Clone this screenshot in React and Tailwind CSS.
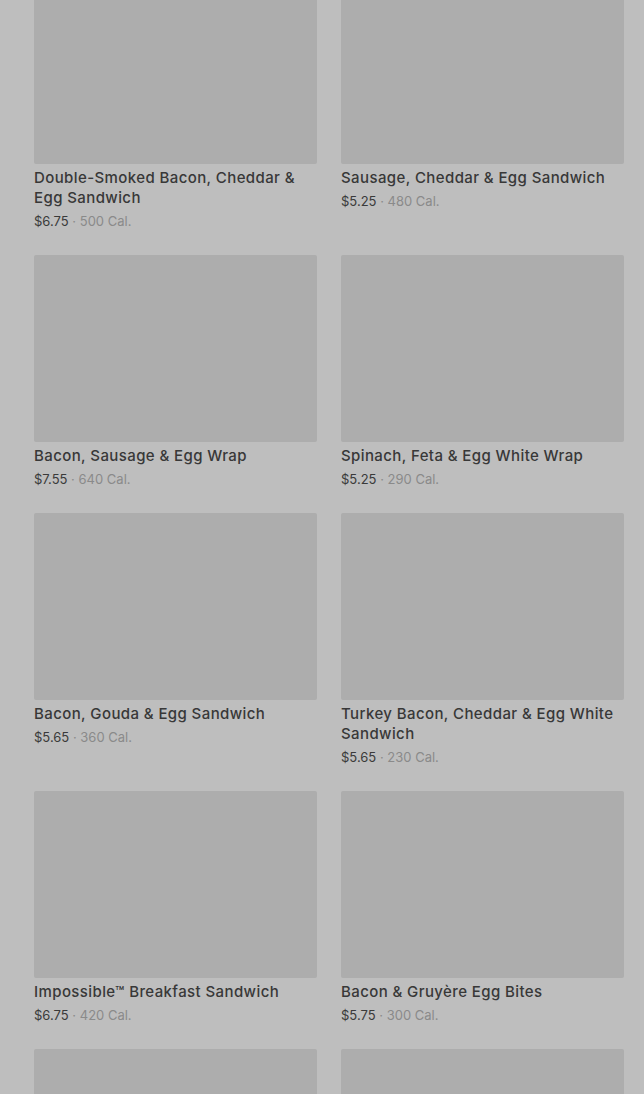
import React from "react";

const items = [
  { name: "Double-Smoked Bacon, Cheddar & Egg Sandwich", price: "$6.75", cal: "500 Cal." },
  { name: "Sausage, Cheddar & Egg Sandwich", price: "$5.25", cal: "480 Cal." },
  { name: "Bacon, Sausage & Egg Wrap", price: "$7.55", cal: "640 Cal." },
  { name: "Spinach, Feta & Egg White Wrap", price: "$5.25", cal: "290 Cal." },
  { name: "Bacon, Gouda & Egg Sandwich", price: "$5.65", cal: "360 Cal." },
  { name: "Turkey Bacon, Cheddar & Egg White Sandwich", price: "$5.65", cal: "230 Cal." },
  { name: "Impossible™ Breakfast Sandwich", price: "$6.75", cal: "420 Cal." },
  { name: "Bacon & Gruyère Egg Bites", price: "$5.75", cal: "300 Cal." },
  { name: "", price: "", cal: "" },
  { name: "", price: "", cal: "" },
];

function Card({ item }) {
  return (
    <div className="flex flex-col">
      <div className="h-[187px] w-full rounded-[2px] bg-[#adadad]" />
      {item.name && (
        <>
          <p className="mt-1 text-[15px] leading-5 font-medium tracking-[0.4px] text-[#383838]">
            {item.name}
          </p>
          <p className="mt-[3px] text-[13px] leading-5 text-[#3a3a3a]">
            {item.price}
            <span className="text-[#8a8a8a]"> · {item.cal}</span>
          </p>
        </>
      )}
    </div>
  );
}

export default function App() {
  return (
    <div
      className="h-[1094px] overflow-hidden bg-[#bebebe]"
      style={{ fontFamily: "Inter, 'Liberation Sans', sans-serif" }}
    >
      <div className="-mt-[23px] grid grid-cols-2 gap-x-6 gap-y-6 pl-[34px] pr-[20px]">
        {items.map((item, i) => (
          <Card key={i} item={item} />
        ))}
      </div>
    </div>
  );
}
